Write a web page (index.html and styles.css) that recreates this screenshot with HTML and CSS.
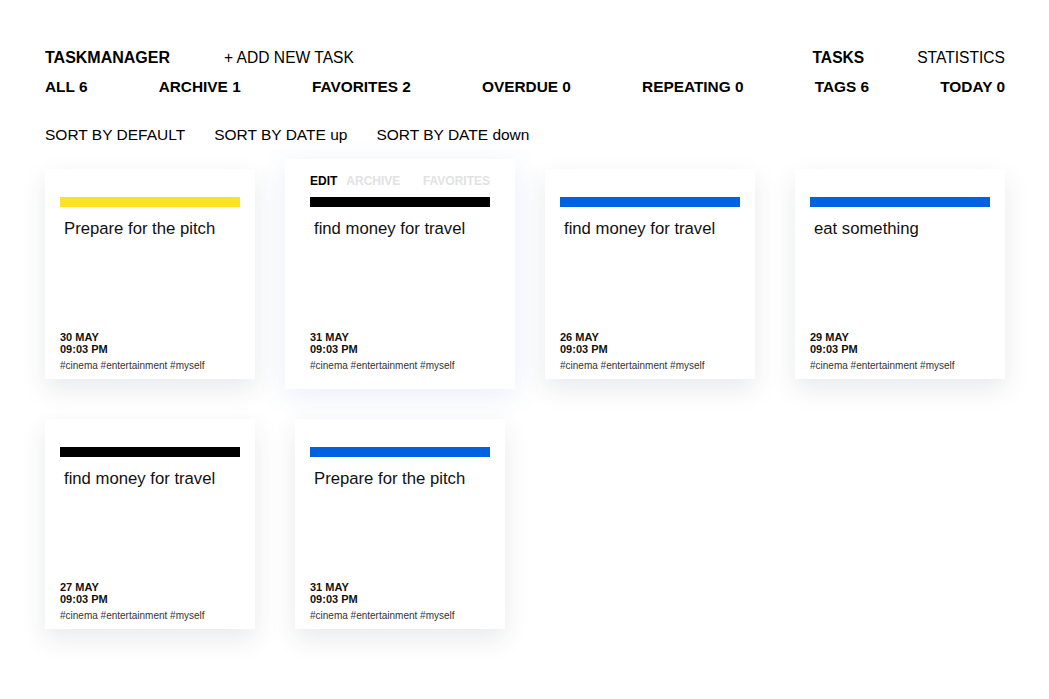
FILE: index.html
```html
<!DOCTYPE html>
<html lang="en">
<head>
<meta charset="utf-8">
<title>TaskManager</title>
<link rel="stylesheet" href="styles.css">
</head>
<body>
<div class="page">
  <header class="top">
    <div class="top-left">
      <span class="logo">TASKMANAGER</span>
      <span class="add">+ ADD NEW TASK</span>
    </div>
    <nav class="top-right">
      <span class="tab active">TASKS</span>
      <span class="tab">STATISTICS</span>
    </nav>
  </header>
  <div class="filters">
    <span>ALL 6</span>
    <span>ARCHIVE 1</span>
    <span>FAVORITES 2</span>
    <span>OVERDUE 0</span>
    <span>REPEATING 0</span>
    <span>TAGS 6</span>
    <span>TODAY 0</span>
  </div>
  <div class="sort">
    <span>SORT BY DEFAULT</span>
    <span>SORT BY DATE up</span>
    <span>SORT BY DATE down</span>
  </div>
  <div class="board">
    <article class="card">
      <div class="controls"><span class="ctl on">EDIT</span><span class="ctl">ARCHIVE</span><span class="ctl fav">FAVORITES</span></div>
      <div class="bar yellow"></div>
      <p class="title">Prepare for the pitch</p>
      <div class="meta"><div class="date">30 MAY<br>09:03 PM</div><div class="tags">#cinema #entertainment #myself</div></div>
    </article>
    <article class="card hover">
      <div class="controls"><span class="ctl on">EDIT</span><span class="ctl">ARCHIVE</span><span class="ctl fav">FAVORITES</span></div>
      <div class="bar black"></div>
      <p class="title">find money for travel</p>
      <div class="meta"><div class="date">31 MAY<br>09:03 PM</div><div class="tags">#cinema #entertainment #myself</div></div>
    </article>
    <article class="card">
      <div class="controls"><span class="ctl on">EDIT</span><span class="ctl">ARCHIVE</span><span class="ctl fav">FAVORITES</span></div>
      <div class="bar blue"></div>
      <p class="title">find money for travel</p>
      <div class="meta"><div class="date">26 MAY<br>09:03 PM</div><div class="tags">#cinema #entertainment #myself</div></div>
    </article>
    <article class="card">
      <div class="controls"><span class="ctl on">EDIT</span><span class="ctl">ARCHIVE</span><span class="ctl fav">FAVORITES</span></div>
      <div class="bar blue"></div>
      <p class="title">eat something</p>
      <div class="meta"><div class="date">29 MAY<br>09:03 PM</div><div class="tags">#cinema #entertainment #myself</div></div>
    </article>
    <article class="card">
      <div class="controls"><span class="ctl on">EDIT</span><span class="ctl">ARCHIVE</span><span class="ctl fav">FAVORITES</span></div>
      <div class="bar black"></div>
      <p class="title">find money for travel</p>
      <div class="meta"><div class="date">27 MAY<br>09:03 PM</div><div class="tags">#cinema #entertainment #myself</div></div>
    </article>
    <article class="card">
      <div class="controls"><span class="ctl on">EDIT</span><span class="ctl">ARCHIVE</span><span class="ctl fav">FAVORITES</span></div>
      <div class="bar blue"></div>
      <p class="title">Prepare for the pitch</p>
      <div class="meta"><div class="date">31 MAY<br>09:03 PM</div><div class="tags">#cinema #entertainment #myself</div></div>
    </article>
  </div>
</div>
</body>
</html>
```
FILE: styles.css
```css
* { box-sizing: border-box; }
html, body { margin: 0; padding: 0; background: #fff; }
body {
  font-family: "Liberation Sans", Arial, Helvetica, sans-serif;
  color: #000;
}
.page {
  width: 1049px;
  padding: 49px 44px 60px 45px;
}
.top {
  display: flex;
  justify-content: space-between;
  font-size: 15.6px;
  line-height: 18px;
}
.top-left { display: flex; gap: 54px; }
.top-right { display: flex; gap: 53px; }
.logo { font-weight: bold; font-size: 16px; }
.tab.active { font-weight: bold; }
.filters {
  margin-top: 11px;
  display: flex;
  justify-content: space-between;
  font-size: 15.4px;
  line-height: 18px;
  font-weight: bold;
}
.sort {
  margin-top: 30px;
  display: flex;
  gap: 29px;
  font-size: 15.5px;
  line-height: 18px;
}
.board {
  margin-top: 25px;
  display: grid;
  grid-template-columns: repeat(4, 210px);
  grid-auto-rows: 210px;
  gap: 40px;
}
.card {
  position: relative;
  display: flex;
  flex-direction: column;
  background: #fff;
  padding: 5px 15px 7px;
  box-shadow: 0 10px 24px rgba(40, 50, 70, 0.1);
}
.card.hover {
  margin: -10px;
  padding: 15px 25px 17px;
  z-index: 1;
  box-shadow: 0 6px 28px rgba(40, 90, 200, 0.1);
}
.controls {
  display: flex;
  font-size: 12px;
  line-height: 14px;
  font-weight: bold;
  color: #e2e2e2;
  visibility: hidden;
}
.card.hover .controls { visibility: visible; }
.ctl.on { color: #000; margin-right: 9px; }
.ctl.fav { margin-left: auto; }
.bar { height: 10px; margin-top: 9px; }
.bar.yellow { background: #ffe125; }
.bar.black { background: #000; }
.bar.blue { background: #0061e1; }
.title {
  margin: 12px 0 0;
  padding-left: 4px;
  font-size: 16.7px;
  line-height: 20px;
  color: #111;
}
.meta { margin-top: auto; }
.date {
  font-size: 11px;
  line-height: 12px;
  font-weight: bold;
  color: #111;
}
.tags {
  margin-top: 5px;
  font-size: 10px;
  line-height: 12px;
  color: #333;
}
```
